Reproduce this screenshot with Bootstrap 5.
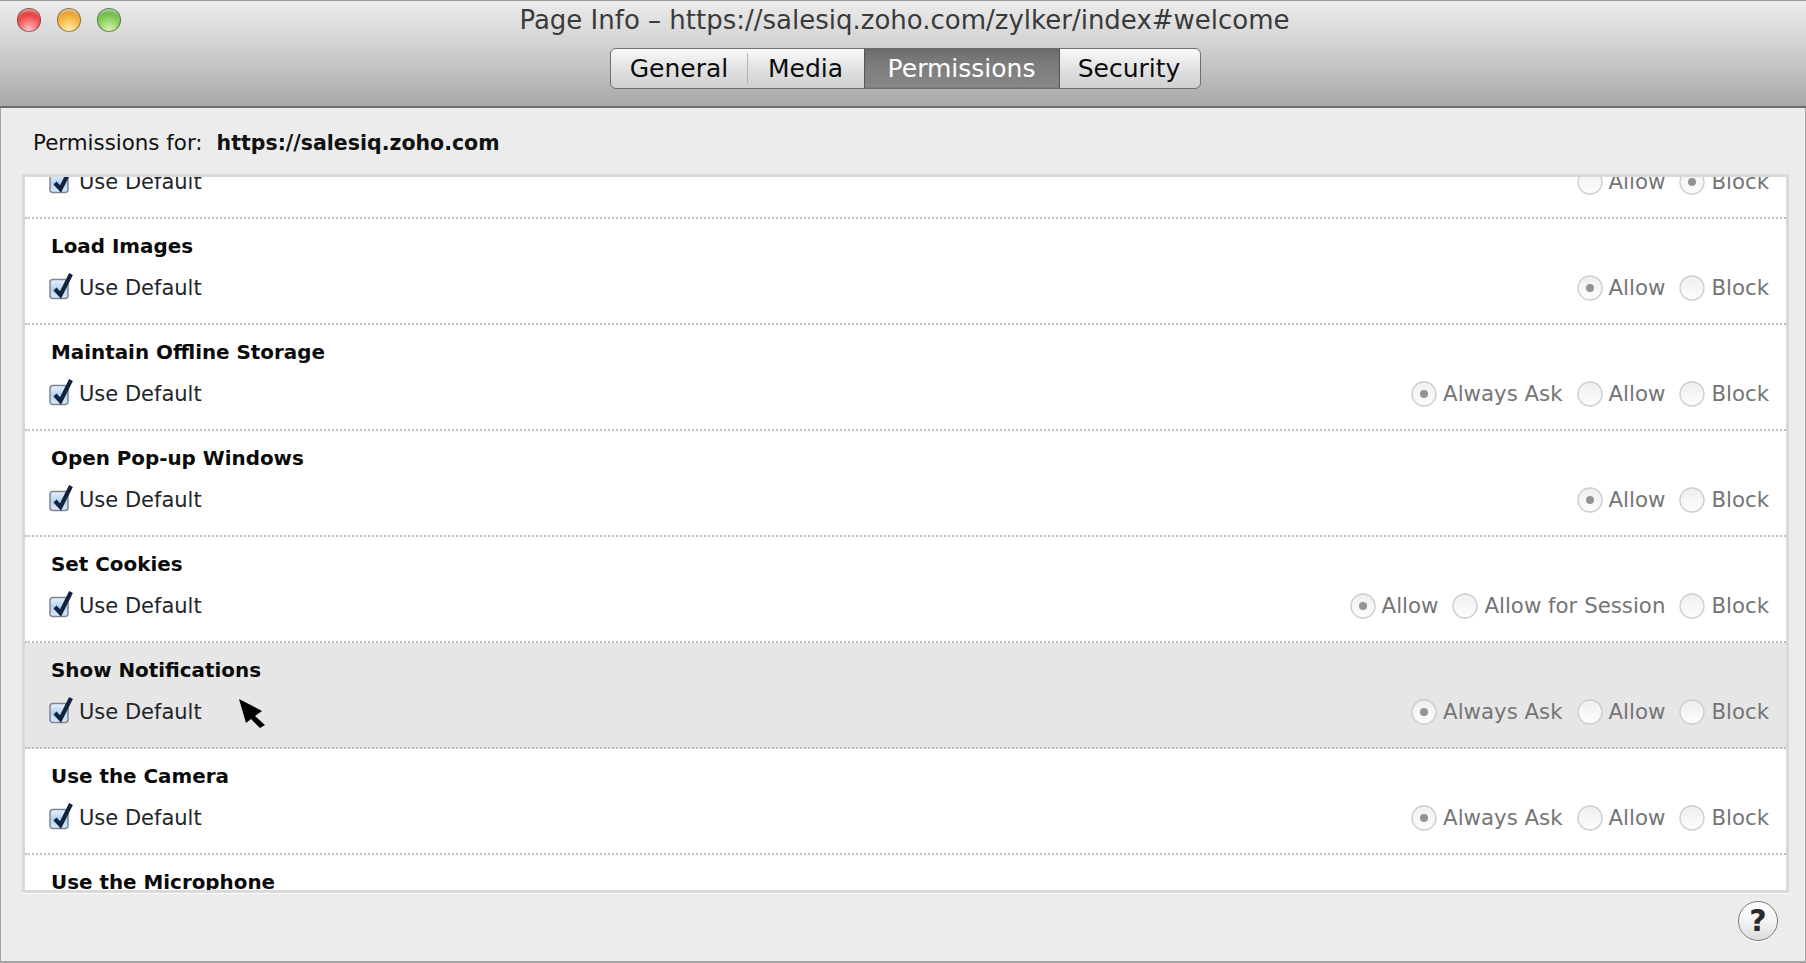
<!doctype html>
<html lang="en">
<head>
<meta charset="utf-8">
<title>Page Info</title>
<link href="https://cdn.jsdelivr.net/npm/bootstrap@5.3.0/dist/css/bootstrap.min.css" rel="stylesheet">
<style>
html,body{height:100%;margin:0;overflow:hidden}
body{background:#ececec;font-family:"DejaVu Sans","Liberation Sans",sans-serif;color:#0c0c0c}
.win{height:963px;border:solid #a3a3a3;border-width:0 1px 2px 1px;position:relative;background:#ececec}
.tbar{height:108px;border-top:1px solid #9b9b9b;border-bottom:2px solid #6e6e6e;background:linear-gradient(#ececec,#d9d9d9 30%,#c6c6c6 60%,#a8a8a8);position:relative;margin:0 -1px}
.lights{position:absolute;left:17px;top:7px;gap:16px}
.light{width:24px;height:24px;border-radius:50%;box-shadow:inset 0 0 0 1px rgba(50,50,50,.5),inset 0 5px 3px -2px rgba(255,255,255,.55)}
.l-r{background:radial-gradient(circle at 50% 90%,#ffc4c4,#ee4a4a 55%,#b92a2a)}
.l-y{background:radial-gradient(circle at 50% 90%,#ffeeab,#f3b03a 55%,#b87a18)}
.l-g{background:radial-gradient(circle at 50% 90%,#d8f4b0,#7fc653 55%,#4a8f2b)}
.ttl{font-size:26px;line-height:28px;padding:5px 0 0 3px;color:#3a3a3a;text-align:center;white-space:nowrap}
.tabs{margin:14px 0 0 4px;border:1px solid #6f6f6f;border-radius:6px;height:41px;overflow:hidden;background:linear-gradient(#fafafa,#e2e2e2 50%,#cfcfcf)}
.tabs .btn{border:0;border-radius:0;font-size:25px;line-height:39px;padding:0;height:39px;color:#0c0c0c;background:transparent;flex:none}
.tabs .t-g{width:137px;position:relative}
.t-g::after{content:"";position:absolute;right:0;top:4px;bottom:4px;width:1px;background:#b5b5b5}
.tabs .t-m{width:118px}
.tabs .t-p{width:196px;color:#fff;background:linear-gradient(#6c6c6c,#7d7d7d 40%,#878787);box-shadow:inset 1px 0 1px #555,inset -1px 0 1px #555}
.tabs .t-s{width:141px}
.phead{height:66px;padding:4px 0 0 32px;font-size:21.4px;color:#111}
.phead b{margin-left:14px;font-size:20.5px}
.pframe{margin:0 16px 0 21px;height:719px;border:3px solid #dadada;background:#fff;overflow:hidden;box-shadow:0 1px 0 #fff}
.list-group-item.prow{height:106px;padding:14px 18px 0 26px;border:0;border-bottom:2px dotted #bdbdbd;background:transparent;border-radius:0;margin:0;flex:none}
.list-group-item.prow-top{height:42px;padding-top:0;padding-bottom:20px;overflow:hidden}
.list-group-item.prow-hi{background:#e6e6e6}
.ptitle{font-weight:700;font-size:19.9px;line-height:28px;height:28px;color:#0a0a0a}
.pctl{height:30px;margin-top:12px;font-size:21px;line-height:30px}
.prow-top .pctl{margin-top:0}
.chk{width:26px;height:30px;margin:-4px 5px 0 -3px;flex:none}
.opts{gap:14px;color:#757575;font-size:21.3px;margin-right:-1px}
.opt{gap:6px}
.rad{width:26px;height:26px;flex:none}
.curs{position:absolute;left:237px;top:698px;width:28px;height:31px}
.help{position:absolute;left:1737px;top:901px;width:40px;height:40px;border-radius:50%;border:1px solid #7b7b7b;background:linear-gradient(#fff,#f4f4f4 50%,#dcdcdc);box-shadow:0 1px 0 #fff;font-weight:700;font-size:30px;line-height:38px;color:#2b2b2b;padding:0;text-align:center}
</style>
</head>
<body>
<svg width="0" height="0" class="position-absolute">
<defs>
<linearGradient id="gc" x1="0" y1="0" x2="0" y2="1"><stop offset="0" stop-color="#eaf2fb"/><stop offset=".5" stop-color="#b4d3f2"/><stop offset="1" stop-color="#dcecfb"/></linearGradient>
<linearGradient id="gr" x1="0" y1="0" x2="0" y2="1"><stop offset="0" stop-color="#efefef"/><stop offset="1" stop-color="#fdfdfd"/></linearGradient>
<symbol id="ick" viewBox="0 0 26 30">
<rect x="2" y="8.5" width="18" height="19" rx="3" fill="url(#gc)" stroke="#7d8794" stroke-width="1.5"/>
<path d="M7 18 L12.5 24 L23 3" fill="none" stroke="#10223f" stroke-width="4.2"/>
</symbol>
<symbol id="ir0" viewBox="0 0 26 26">
<circle cx="13" cy="13" r="12" fill="url(#gr)" stroke="#cdcdcd" stroke-width="1.4"/>
</symbol>
<symbol id="ir1" viewBox="0 0 26 26">
<circle cx="13" cy="13" r="12" fill="url(#gr)" stroke="#cdcdcd" stroke-width="1.4"/>
<circle cx="13" cy="13" r="4" fill="#939393"/>
</symbol>
</defs>
</svg>
<div class="win d-flex flex-column">
  <header class="tbar d-flex flex-column align-items-center">
    <div class="lights d-flex">
      <span class="light l-r"></span><span class="light l-y"></span><span class="light l-g"></span>
    </div>
    <div class="ttl">Page Info – https://salesiq.zoho.com/zylker/index#welcome</div>
    <div class="btn-group tabs" role="group">
      <button type="button" class="btn t-g">General</button>
      <button type="button" class="btn t-m">Media</button>
      <button type="button" class="btn t-p">Permissions</button>
      <button type="button" class="btn t-s">Security</button>
    </div>
  </header>
  <div class="phead d-flex align-items-center"><span>Permissions for:</span><b>https://salesiq.zoho.com</b></div>
  <div class="pframe">
    <div class="list-group list-group-flush">
      <div class="list-group-item prow prow-top d-flex flex-column justify-content-end">
        <div class="pctl d-flex align-items-center justify-content-between flex-none">
          <div class="d-flex align-items-center"><svg class="chk"><use href="#ick"/></svg><span>Use Default</span></div>
          <div class="opts d-flex">
            <div class="opt d-flex align-items-center"><svg class="rad"><use href="#ir0"/></svg>Allow</div>
            <div class="opt d-flex align-items-center"><svg class="rad"><use href="#ir1"/></svg>Block</div>
          </div>
        </div>
      </div>
      <div class="list-group-item prow">
        <div class="ptitle">Load Images</div>
        <div class="pctl d-flex align-items-center justify-content-between">
          <div class="d-flex align-items-center"><svg class="chk"><use href="#ick"/></svg><span>Use Default</span></div>
          <div class="opts d-flex">
            <div class="opt d-flex align-items-center"><svg class="rad"><use href="#ir1"/></svg>Allow</div>
            <div class="opt d-flex align-items-center"><svg class="rad"><use href="#ir0"/></svg>Block</div>
          </div>
        </div>
      </div>
      <div class="list-group-item prow">
        <div class="ptitle">Maintain Offline Storage</div>
        <div class="pctl d-flex align-items-center justify-content-between">
          <div class="d-flex align-items-center"><svg class="chk"><use href="#ick"/></svg><span>Use Default</span></div>
          <div class="opts d-flex">
            <div class="opt d-flex align-items-center"><svg class="rad"><use href="#ir1"/></svg>Always Ask</div>
            <div class="opt d-flex align-items-center"><svg class="rad"><use href="#ir0"/></svg>Allow</div>
            <div class="opt d-flex align-items-center"><svg class="rad"><use href="#ir0"/></svg>Block</div>
          </div>
        </div>
      </div>
      <div class="list-group-item prow">
        <div class="ptitle">Open Pop-up Windows</div>
        <div class="pctl d-flex align-items-center justify-content-between">
          <div class="d-flex align-items-center"><svg class="chk"><use href="#ick"/></svg><span>Use Default</span></div>
          <div class="opts d-flex">
            <div class="opt d-flex align-items-center"><svg class="rad"><use href="#ir1"/></svg>Allow</div>
            <div class="opt d-flex align-items-center"><svg class="rad"><use href="#ir0"/></svg>Block</div>
          </div>
        </div>
      </div>
      <div class="list-group-item prow">
        <div class="ptitle">Set Cookies</div>
        <div class="pctl d-flex align-items-center justify-content-between">
          <div class="d-flex align-items-center"><svg class="chk"><use href="#ick"/></svg><span>Use Default</span></div>
          <div class="opts d-flex">
            <div class="opt d-flex align-items-center"><svg class="rad"><use href="#ir1"/></svg>Allow</div>
            <div class="opt d-flex align-items-center"><svg class="rad"><use href="#ir0"/></svg>Allow for Session</div>
            <div class="opt d-flex align-items-center"><svg class="rad"><use href="#ir0"/></svg>Block</div>
          </div>
        </div>
      </div>
      <div class="list-group-item prow prow-hi">
        <div class="ptitle">Show Notifications</div>
        <div class="pctl d-flex align-items-center justify-content-between">
          <div class="d-flex align-items-center"><svg class="chk"><use href="#ick"/></svg><span>Use Default</span></div>
          <div class="opts d-flex">
            <div class="opt d-flex align-items-center"><svg class="rad"><use href="#ir1"/></svg>Always Ask</div>
            <div class="opt d-flex align-items-center"><svg class="rad"><use href="#ir0"/></svg>Allow</div>
            <div class="opt d-flex align-items-center"><svg class="rad"><use href="#ir0"/></svg>Block</div>
          </div>
        </div>
      </div>
      <div class="list-group-item prow">
        <div class="ptitle">Use the Camera</div>
        <div class="pctl d-flex align-items-center justify-content-between">
          <div class="d-flex align-items-center"><svg class="chk"><use href="#ick"/></svg><span>Use Default</span></div>
          <div class="opts d-flex">
            <div class="opt d-flex align-items-center"><svg class="rad"><use href="#ir1"/></svg>Always Ask</div>
            <div class="opt d-flex align-items-center"><svg class="rad"><use href="#ir0"/></svg>Allow</div>
            <div class="opt d-flex align-items-center"><svg class="rad"><use href="#ir0"/></svg>Block</div>
          </div>
        </div>
      </div>
      <div class="list-group-item prow">
        <div class="ptitle">Use the Microphone</div>
      </div>
    </div>
  </div>
  <svg class="curs" viewBox="0 0 28 31"><polygon points="1,1 24,13 17,18 27,27 22,30 13,21 8,25" fill="#000"/></svg>
  <button type="button" class="help">?</button>
</div>
</body>
</html>
